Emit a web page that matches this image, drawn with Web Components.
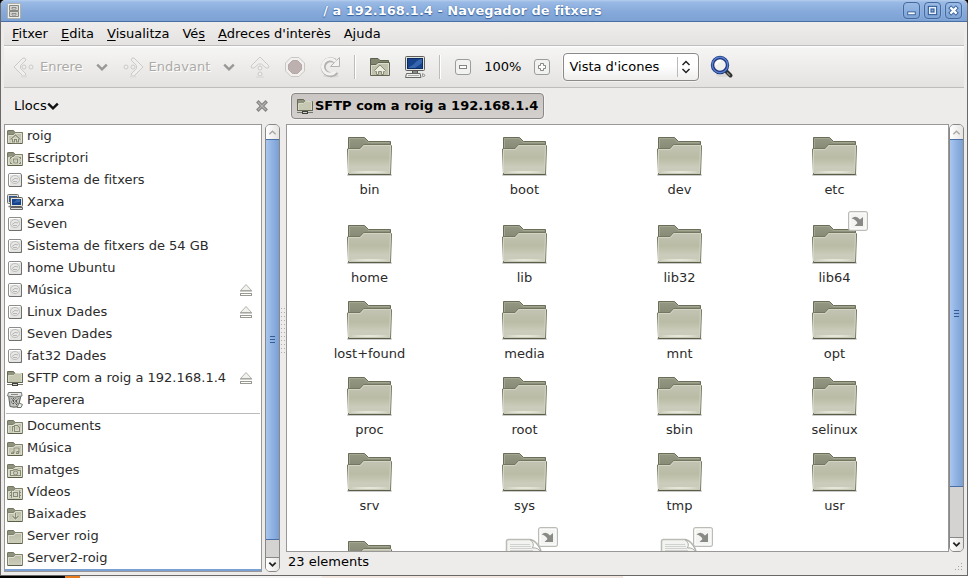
<!DOCTYPE html>
<html lang="ca">
<head>
<meta charset="utf-8">
<title>/ a 192.168.1.4 - Navegador de fitxers</title>
<style>
html, body { margin: 0; height: 100%; }
body { font: 13px/16px "DejaVu Sans", sans-serif; color: #000; background: #000; overflow: hidden; }
</style>
</head>
<body>
<file-browser></file-browser>
<script>
const define = (name, html, setup) => {
  const template = document.createElement('template');
  template.innerHTML = html;
  customElements.define(name, class extends HTMLElement {
    constructor() {
      super();
      this.attachShadow({ mode: 'open' }).append(template.content.cloneNode(true));
    }
    connectedCallback() { if (setup) setup(this, this.shadowRoot); }
  });
};

const RESET = `button, a { all: unset; box-sizing: border-box; cursor: default; }`;

/* ---------- icons ---------- */
const smallFolder = extra => `<svg viewBox="0 0 16 16">
  <path d="M.5 14V3Q.5 2.500 1 2.500H6.500L8 4.500H14.500Q15.500 4.500 15.500 5.500V14Z" fill="#8f927d" stroke="#74775f"/>
  <path d="M.5 7L2 6.500H6.500L8 4.500H15.500V15.500H.5Z" fill="url(#sf)" stroke="#7f826b"/>
  <path d="M1.500 14.500V7.500H7L8.500 5.500H14.500V14.500" fill="none" stroke="#dedfd0"/>
  <path d="M1 15.500H15" stroke="#5c5f47"/>
  <defs><linearGradient id="sf" x2="0" y2="1"><stop stop-color="#b8baa5"/><stop offset="1" stop-color="#cdcfbc"/></linearGradient></defs>${extra || ''}</svg>`;
const glyph = d => `<path d="${d}" fill="none" stroke="#f1f2e6" stroke-width="2.400" opacity=".6"/><path d="${d}" fill="none" stroke="#888b74" stroke-width="1.100"/>`;
const chevron = (w, c) => `<svg viewBox="0 0 10 10"><path d="M1 3L5 7L9 3" fill="none" stroke="${c}" stroke-width="${w}"/></svg>`;
const SOFT = 'fill="#f0efed" stroke="#cccac7" stroke-width="1"';
const ICONS = {
  folder: smallFolder(),
  home: smallFolder(glyph('M3.500 11.500L8.500 7L13.500 11.500M5.500 11V14H7.500V11.500H9.500V14H11.500V11')),
  desktop: smallFolder(glyph('M3.500 9V7.500H5M12 7.500H13.500V9M3.500 12V13.500H5M12 13.500H13.500V12M6.500 9H10.500V13H7Z')),
  documents: smallFolder(glyph('M5.500 13.500V8.500H7.500M7.500 7.500H10.500L12.500 9.500V13.500H7.500Z')),
  music: smallFolder(glyph('M7 13V8H12V12.500M4.500 13.500H6.500V12H5ZM9.500 13.500H11.500V11.500H10Z')),
  pictures: smallFolder(glyph('M3.500 13.500V8.500H6L7 7.500H10L11 8.500H13.500V13.500ZM8.500 9A2 2 0 1 0 8.600 9Z')),
  videos: smallFolder(glyph('M4.500 6.500V14M12.500 6.500V14M6.500 8.500H10.500V12.500H6.500ZM3 8.500H4M3 11.500H4M13 8.500H14M13 11.500H14')),
  downloads: smallFolder(glyph('M8.500 7V12.500M5.500 10L8.500 13L11.500 10')),
  server: `<svg viewBox="0 0 16 16">
    <path d="M.5 12.500V1.500H6.500L8 3.500H15.500V12.500Z" fill="#8f927d" stroke="#666953"/>
    <path d="M1.500 12.500V5.500H6.500L8.500 3.500H14.500V12.500Z" fill="#c6c8b2" stroke="#d8dac8"/>
    <path d="M.5 5.500V12.500H15.500V4" fill="none" stroke="#666953"/>
    <path d="M0 14.500H16" stroke="#77786d"/><rect x="5.500" y="13.500" width="5" height="2" fill="#cfd0ca" stroke="#3f423c"/></svg>`,
  drive: `<svg viewBox="0 0 16 16"><rect x="1.500" y="1.500" width="13" height="13" rx="1.500" fill="#e4e4e3" stroke="#8d8d8c"/>
    <path d="M2.500 13V2.500H13" fill="none" stroke="#fff"/><path d="M2 14.500H14.500V3" fill="none" stroke="#6f6f6e"/>
    <ellipse cx="8" cy="7.500" rx="4.500" ry="4" fill="#e9e9e8" stroke="#bdbdbc"/><path d="M5 8.500Q8 5 11 7M6 9.500H10" fill="none" stroke="#b5b5b4"/></svg>`,
  network: `<svg viewBox="0 0 16 16"><rect x=".5" y=".5" width="11" height="9" rx="1" fill="#dcdcd7" stroke="#6f706b"/><rect x="2" y="2" width="8" height="6" fill="#2c5695"/>
    <path d="M1.500 12.500H5" stroke="#777" stroke-width="1.500"/>
    <rect x="3.500" y="3.500" width="12" height="9" rx="1" fill="#e5e5e0" stroke="#5f605c"/><rect x="5" y="5" width="9" height="6" fill="#16438b"/><path d="M6 9L10 5.500H13V8Z" fill="#3767ad"/>
    <path d="M3.500 13.500H15.500V15.500H3.500Z" fill="#ddd" stroke="#666"/></svg>`,
  trash: `<svg viewBox="0 0 16 16"><path d="M1.500 3L3 14.500Q7 16 11.500 14.500L14 3Z" fill="#b5b7b3" stroke="#60635d"/>
    <path d="M4 6L6 8L4 10L6 12M6 6L9 9L6 12M9 6L6 9L10 13M12 6L9 9L11 12" fill="none" stroke="#4e514c"/>
    <path d="M5 6V14M8 6V14M11 6V13" stroke="#e2e3e0" stroke-width=".7"/>
    <path d="M.5 4L1.500 .5H14.500L15 4Q8 6 .5 4Z" fill="#e5e6e3" stroke="#777a74"/><path d="M4 2.500H11" stroke="#888b85"/>
    <path d="M10 15.500L12 11L15.500 12.500L14 15.500Z" fill="#eceeea" stroke="#71746e"/></svg>`,
  eject: `<svg viewBox="0 0 14 14"><path d="M1.500 7.500L7 1.500L12.500 7.500Z" fill="#f1f1ee" stroke="#b3b4ad"/><path d="M1 8H13" stroke="#999b92"/><rect x="1.500" y="10.500" width="11" height="2" fill="#fff" stroke="#999b92"/></svg>`,
  bigFolder: `<svg viewBox="1 0 48 44"><defs>
      <linearGradient id="bf" x2="0" y2="1"><stop stop-color="#c3c4b3"/><stop offset=".2" stop-color="#bfc0ad"/><stop offset=".45" stop-color="#babca5"/><stop offset=".75" stop-color="#cbccbb"/><stop offset="1" stop-color="#c9cab8"/></linearGradient>
      <linearGradient id="bb" x2="0" y2="1"><stop stop-color="#959883"/><stop offset="1" stop-color="#7d806c"/></linearGradient>
      <linearGradient id="sh"><stop stop-color="#fff" stop-opacity="0"/><stop offset=".5" stop-color="#e6e7d8"/><stop offset="1" stop-color="#fff" stop-opacity="0"/></linearGradient></defs>
    <rect x="2" y="37" width="45" height="2" rx="1" fill="#000" opacity=".2"/>
    <path d="M3.500 20V.5H19.500L23.500 4.500H45.500V20Z" fill="url(#bb)" stroke="#6a6d57"/>
    <path d="M4.500 11V1.500H19L23 5.500H44.500" fill="none" stroke="#a3a691"/>
    <path d="M2.500 12L3 11.500H15L18.500 7.500H45.500L46.500 9L45.500 37.500H3.500Z" fill="url(#bf)" stroke="#74775f"/>
    <path d="M3.500 36V12.500H15.500L19 8.500H45.500L44.500 36" fill="none" stroke="#d3d4c4"/>
    <rect x="5" y="34" width="39" height="2" fill="url(#sh)"/><path d="M3.500 37.500H45.500" stroke="#5b5e46"/></svg>`,
  document: `<svg viewBox="1 0 48 44"><path d="M6.500 44V.5Q6.500-1.500 8.500-1.500H30C35-1 40 5 41.500 12V44Z" fill="#f3f4f1" stroke="#babdb6" stroke-width="1.500"/>
    <path d="M10 3.500H30M10 5.500H31M10 7.500H32M10 9.500H33" stroke="#d0d2cd"/><path d="M30-1.500Q35 2 32.500 7Q38 6 41.500 12Q38 1 30-1.500Z" fill="#fff" stroke="#a9aca5"/></svg>`,
  emblem: `<svg viewBox="0 0 20 20"><rect x=".7" y=".7" width="18.600" height="18.600" rx="2" fill="#f4f4f3" stroke="#babdb6" stroke-width="1.400"/><rect x="2" y="2" width="16" height="16" fill="none" stroke="#fff"/>
    <path d="M3.500 7.500Q8 3.500 12 8.500L15 6V15H6.500L9.500 12Q7.500 8 3.500 7.500Z" fill="#888a85"/></svg>`,
  back: `<svg viewBox="0 0 24 24"><path d="M2 12L11 3Q13 2 14 5L8.500 10.500V13.500L14 19Q13 22 11 21Z" ${SOFT}/><circle cx="12" cy="12" r="2" ${SOFT}/><circle cx="19" cy="12" r="2" ${SOFT}/><path d="M9 21.500H15" stroke="#dedcda" stroke-width="2"/></svg>`,
  forward: `<svg viewBox="0 0 24 24"><path d="M22 12L13 3Q11 2 10 5L15.500 10.500V13.500L10 19Q11 22 13 21Z" ${SOFT}/><circle cx="12" cy="12" r="2" ${SOFT}/><circle cx="5" cy="12" r="2" ${SOFT}/><path d="M9 21.500H15" stroke="#dedcda" stroke-width="2"/></svg>`,
  up: `<svg viewBox="0 0 24 24"><path d="M12 2L21 11Q21 14 18 13L13.500 9H10.500L6 13Q3 14 3 11Z" ${SOFT}/><circle cx="12" cy="13" r="2" ${SOFT}/><circle cx="12" cy="19" r="2" ${SOFT}/><path d="M8 22H16" stroke="#d8d6d4"/></svg>`,
  stop: `<svg viewBox="0 0 24 24"><path d="M8 2.500H16L21.500 8V16L16 21.500H8L2.500 16V8Z" fill="#f1f0ee" stroke="#c9c7c4"/><path d="M9.500 5.500H14.500L18.500 9.500V14.500L14.500 18.500H9.500L5.500 14.500V9.500Z" fill="#bdb1b0" stroke="#b5a8a7"/></svg>`,
  reload: `<svg viewBox="0 0 24 24"><ellipse cx="13" cy="21" rx="8" ry="1.500" fill="#d9d7d5"/><path d="M18.500 17A7.500 7.500 0 1 1 17 6" fill="none" stroke="#b5b3b0" stroke-width="5"/><path d="M21.500 2.500V11.500H12.500Z" fill="#f3f2f0" stroke="#b5b3b0"/><path d="M17.700 16.300A7.500 7.500 0 1 1 17.500 6.500" fill="none" stroke="#f3f2f0" stroke-width="3"/></svg>`,
  homeFolder: `<svg viewBox="0 0 24 24"><path d="M2.500 18V3.500H10L12 5.500H20.500V18Z" fill="#82856f" stroke="#5e614c"/>
    <path d="M2.500 9.500H8L10 7.500H21.500V20.500H2.500Z" fill="#c0c2ad" stroke="#63664f"/><path d="M3.500 20V10.500H8.500L10.500 8.500H20.500V20" fill="none" stroke="#dcddce"/>
    <path d="M6.500 15.500L12 10L17.500 15.500L16.500 16.500H15.500V19.500H13.500V16.500H10.500V19.500H8.500V16.500H7.500Z" fill="#eceddf" stroke="#888b74"/></svg>`,
  computer: `<svg viewBox="0 0 24 24"><rect x="2.500" y="1.500" width="19" height="14" rx="1" fill="#e4e4df" stroke="#5e5f5b"/><rect x="4.500" y="3.500" width="15" height="10" fill="#16438b" stroke="#0c2c61"/><path d="M5 13L11 9Q15 4 19 4V8L12 13Z" fill="#3666ad"/>
    <path d="M9.500 15.500H14.500V18.500H9.500Z" fill="#888a85" stroke="#555"/><path d="M5 18.500H18" stroke="#ccc"/><path d="M3.500 18.500H17L18 22.500H2.500Z" fill="#f0f0ee" stroke="#696a66"/><path d="M5 20.500H16" stroke="#aaa"/><path d="M19.500 18.500L22 20Q22 22 19.500 21.500Z" fill="#eee" stroke="#999"/></svg>`,
  zoomOut: `<svg viewBox="0 0 16 16"><rect x=".5" y=".5" width="15" height="15" rx="2.500" fill="#f2f2f0" stroke="#9b9d98"/><rect x="4.500" y="6.500" width="7" height="3" fill="#fff" stroke="#858782"/></svg>`,
  zoomIn: `<svg viewBox="0 0 16 16"><rect x=".5" y=".5" width="15" height="15" rx="2.500" fill="#f2f2f0" stroke="#9b9d98"/><path d="M6.500 4.500H9.500V6.500H11.500V9.500H9.500V11.500H6.500V9.500H4.500V6.500H6.500Z" fill="#fff" stroke="#858782"/></svg>`,
  search: `<svg viewBox="0 0 24 24"><ellipse cx="13" cy="20" rx="7" ry="2" fill="#dad9d7"/><path d="M16 16L20.500 20.500" stroke="#2e3030" stroke-width="4" stroke-linecap="round"/><path d="M17 17.500L20 20.500" stroke="#8f8b80" stroke-width="1.200"/>
    <circle cx="10" cy="10" r="7.500" fill="#f0f0ef" stroke="#20347c" stroke-width="3.400"/><circle cx="10" cy="10" r="7.700" fill="none" stroke="#5580cf" stroke-width="1.400"/><path d="M6 10Q7 6 11 6" fill="none" stroke="#fff" stroke-width="2"/></svg>`,
  down: chevron(2, '#9a9895'),
  downDark: chevron(2, '#111'),
  arrowUp: `<svg viewBox="0 0 10 10"><path d="M1.500 7L5 3.500L8.500 7" fill="none" stroke="#aaa8a6" stroke-width="1.500"/></svg>`,
  arrowDown: `<svg viewBox="0 0 10 10"><path d="M1.500 3L5 6.500L8.500 3" fill="none" stroke="#222" stroke-width="2"/></svg>`,
  updown: `<svg viewBox="0 0 10 14"><path d="M1.500 5L5 1.500L8.500 5M1.500 9L5 12.500L8.500 9" fill="none" stroke="#222" stroke-width="1.500"/></svg>`,
  close: `<svg viewBox="0 0 12 12"><path d="M2.500 2.500L9.500 9.500M9.500 2.500L2.500 9.500" stroke="#858481" stroke-width="3.400" stroke-linecap="square"/><path d="M2.500 2.500L9.500 9.500M9.500 2.500L2.500 9.500" stroke="#b5b3b1" stroke-width="1.200" stroke-linecap="square"/></svg>`,
  cabinet: `<svg viewBox="0 0 16 16"><rect x="1.500" y=".5" width="13" height="15" rx="1" fill="#efefec" stroke="#b0b0a8"/><path d="M3.500 2.500H12.500V7.500H3.500ZM3.500 8.500H12.500V13.500H3.500Z" fill="#d5d5d1" stroke="#888983"/><path d="M6 4.500H10V6H6ZM6 10.500H10V12H6Z" fill="#fff" stroke="#777" stroke-width=".8"/></svg>`,
  minimize: `<svg viewBox="0 0 16 16"><path d="M3.500 11H12.500" stroke="#35609c" stroke-width="4"/><path d="M4.500 11H11.500" stroke="#fff" stroke-width="2"/></svg>`,
  maximize: `<svg viewBox="0 0 16 16"><rect x="5" y="5" width="6" height="6" fill="none" stroke="#35609c" stroke-width="4"/><rect x="5" y="5" width="6" height="6" fill="none" stroke="#e6effb" stroke-width="1.600"/></svg>`,
  shut: `<svg viewBox="0 0 16 16"><path d="M5.500 5.500L10.500 10.500M10.500 5.500L5.500 10.500" stroke="#35609c" stroke-width="4.400" stroke-linecap="square"/><path d="M5.500 5.500L10.500 10.500M10.500 5.500L5.500 10.500" stroke="#fff" stroke-width="2.400" stroke-linecap="square"/></svg>`
};
define('ui-icon', `<style>:host{display:block;flex:none;width:var(--w,16px);height:var(--h,var(--w,16px))} span{display:contents} svg{display:block;width:100%;height:100%;overflow:visible}</style><span></span>`,
  (el, root) => { root.querySelector('span').innerHTML = ICONS[el.getAttribute('name')] || ''; });

/* ---------- title bar ---------- */
define('title-bar', `<style>${RESET}
:host{display:flex;align-items:center;gap:5px;height:21px;padding:0 5px 0 5px;border-bottom:1px solid #4a6ea6;border-top-left-radius:5px;border-top-right-radius:5px;background:linear-gradient(#b5cdee,#9abae5 2px,#86aadb 55%,#7ca1d3)}
h1{flex:1;margin:0;text-align:center;font:bold 13px/16px "DejaVu Sans",sans-serif;color:#fff;text-shadow:0 1px 1px #35609c,0 0 1px #35609c}
button{width:17px;height:17px;border:1px solid #45699d;border-radius:4px;background:linear-gradient(#9bbbe6,#7ea3d5);box-shadow:0 0 0 1px #a5c2ea55;display:grid;place-items:center;--w:15px}
nav{display:flex;gap:4px}
</style><ui-icon name="cabinet"></ui-icon><h1><slot></slot></h1>
<nav><button aria-label="Minimitza"><ui-icon name="minimize"></ui-icon></button><button aria-label="Maximitza"><ui-icon name="maximize"></ui-icon></button><button aria-label="Tanca"><ui-icon name="shut"></ui-icon></button></nav>`);

/* ---------- menu bar ---------- */
define('menu-bar', `<style>${RESET}
:host{display:flex;gap:13px;height:23px;align-items:center;padding:0 8px;border-bottom:1px solid #c0bebc;background:linear-gradient(#eeedec,#e4e3e1)}
u{text-underline-offset:2px;text-decoration-thickness:1px}
</style><button><u>F</u>itxer</button><button><u>E</u>dita</button><button><u>V</u>isualitza</button><button>Vé<u>s</u></button><button><u>A</u>dreces d'interès</button><button>A<u>j</u>uda</button>`);

/* ---------- toolbar ---------- */
define('tool-bar', `<style>${RESET}
:host{display:flex;align-items:center;gap:11px;height:41px;padding:0 8px;border-bottom:1px solid #bfbdbb;background:linear-gradient(#fff,#f5f5f4 2px,#e4e2e0)}
button{display:flex;align-items:center;gap:4px}
button:disabled{color:#acaaa7;text-shadow:1px 1px 0 #fff}
.big{--w:24px}
.more{width:16px;justify-content:center;--w:12px}
hr{border:0;border-left:1px solid #bebcba;border-right:1px solid #fff;height:24px;margin:0 1px}
.zoom{display:flex;gap:13px;align-items:center;padding:0 2px}
.pick{display:grid;align-items:center;width:136px;height:28px}
select{grid-area:1/1;appearance:none;font:inherit;color:#000;width:100%;height:100%;padding:0 36px 0 5px;margin:0;border:1px solid #8c8a88;border-radius:4px;background:linear-gradient(#fff 45%,#efeeed);box-shadow:0 0 0 1px #fff8}
.pick ui-icon{grid-area:1/1;justify-self:end;margin-right:8px;--w:10px;--h:14px;pointer-events:none}
.pick i{grid-area:1/1;justify-self:end;margin-right:21px;width:1px;height:20px;background:#bdbbb9;pointer-events:none}
</style>
<button disabled class="big"><ui-icon name="back"></ui-icon>Enrere</button><button disabled class="more" aria-label="Historial enrere"><ui-icon name="down"></ui-icon></button>
<button disabled class="big"><ui-icon name="forward"></ui-icon>Endavant</button><button disabled class="more" aria-label="Historial endavant"><ui-icon name="down"></ui-icon></button>
<button disabled class="big" aria-label="Amunt"><ui-icon name="up"></ui-icon></button>
<button disabled class="big" aria-label="Atura"><ui-icon name="stop"></ui-icon></button>
<button class="big" aria-label="Recarrega"><ui-icon name="reload"></ui-icon></button><hr>
<button class="big" aria-label="Inici"><ui-icon name="homeFolder"></ui-icon></button>
<button class="big" aria-label="Ordinador"><ui-icon name="computer"></ui-icon></button><hr>
<div class="zoom"><button aria-label="Redueix"><ui-icon name="zoomOut"></ui-icon></button><button>100%</button><button aria-label="Amplia"><ui-icon name="zoomIn"></ui-icon></button></div>
<div class="pick"><select aria-label="Vista"><option>Vista d'icones</option></select><i></i><ui-icon name="updown"></ui-icon></div>
<button class="big" aria-label="Cerca"><ui-icon name="search"></ui-icon></button>`);

/* ---------- scroll bar ---------- */
define('scroll-bar', `<style>${RESET}
:host{display:flex;flex-direction:column;flex:none;box-sizing:border-box;width:15px;border:1px solid #8a8886;border-radius:5px;background:#d5d3d1;overflow:hidden}
button{height:14px;flex:none;display:grid;place-items:center;background:linear-gradient(90deg,#fff,#e6e4e2);--w:9px}
.track{flex:1;display:flex;flex-direction:column}
.thumb{box-sizing:border-box;height:var(--thumb);border:solid #4a6ea6;border-width:1px 0;background:linear-gradient(90deg,#a9c6ee,#8fb2e2 50%,#7a9fd2);display:grid;place-items:center}
.grip{width:5px;height:7px;background:repeating-linear-gradient(#345c94 0 1px,transparent 1px 3px)}
button:last-child{border-top:1px solid #8a8886}
</style><button aria-label="Amunt"><ui-icon name="arrowUp"></ui-icon></button><div class="track"><div class="thumb"><div class="grip"></div></div></div><button aria-label="Avall"><ui-icon name="arrowDown"></ui-icon></button>`);

/* ---------- places side pane ---------- */
define('place-item', `<style>${RESET}
:host{display:block;color:#2b2b2b}
a{display:flex;align-items:center;width:100%;height:22px;gap:4px;padding:0 8px 0 2px}
span{flex:1;white-space:nowrap}
:host([selected]) a{background:#7ba0d4}
:host([selected]) .kind{visibility:hidden}
ui-icon[name=eject]{--w:14px}
</style><a href="#"><span><slot></slot></span></a>`, (el, root) => {
  const link = root.querySelector('a');
  link.insertAdjacentHTML('afterbegin', `<ui-icon class="kind" name="${el.getAttribute('icon')}"></ui-icon>`);
  if (el.hasAttribute('eject')) link.insertAdjacentHTML('beforeend', '<ui-icon name="eject"></ui-icon>');
});
const place = ([icon, text, eject]) => `<place-item icon="${icon}" ${eject ? 'eject' : ''}>${text}</place-item>`;
const PLACES = [['home','roig'],['desktop','Escriptori'],['drive','Sistema de fitxers'],['network','Xarxa'],['drive','Seven'],['drive','Sistema de fitxers de 54 GB'],['drive','home Ubuntu'],['drive','Música',1],['drive','Linux Dades',1],['drive','Seven Dades'],['drive','fat32 Dades'],['server','SFTP com a roig a 192.168.1.4',1],['trash','Paperera']];
const BOOKMARKS = [['documents','Documents'],['music','Música'],['pictures','Imatges'],['videos','Vídeos'],['downloads','Baixades'],['folder','Server roig'],['folder','Server2-roig']];
define('side-pane', `<style>${RESET}
:host{display:flex;flex-direction:column;flex:none;width:276px;min-height:0;padding-bottom:3px;box-sizing:border-box}
header{display:flex;justify-content:space-between;align-items:center;height:36px;padding:0 12px 0 10px}
button{display:flex;align-items:center;--w:12px}
.body{flex:1;min-height:0;display:flex;gap:3px}
.list{flex:1;min-height:0;overflow:hidden;border:1px solid #9a9896;background:#fff}
hr{margin:2px 1px 1px;border:0;border-top:1px solid #bdbbb9}
scroll-bar{--thumb:96%}
</style><header><button>Llocs<ui-icon name="downDark"></ui-icon></button><button aria-label="Tanca la barra"><ui-icon name="close"></ui-icon></button></header>
<div class="body"><div class="list">${PLACES.map(place).join('')}<hr>${BOOKMARKS.map(place).join('')}<place-item icon="folder" selected></place-item></div><scroll-bar></scroll-bar></div>`);

/* ---------- icon view ---------- */
define('file-icon', `<style>${RESET}
:host{display:block;color:#2b2b2b}
button{display:flex;flex-direction:column;align-items:center;width:100%}
.pic{position:relative;--w:48px;--h:44px}
:host([linked]) .pic{margin-top:12px}
.emblem{position:absolute;right:-9px;top:-14px;--w:20px;--h:20px}
.name{height:18px;line-height:18px}
</style><button><div class="pic"></div><div class="name"><slot></slot></div></button>`, (el, root) => {
  root.querySelector('.pic').innerHTML = `<ui-icon name="${el.getAttribute('kind') || 'bigFolder'}"></ui-icon>` + (el.hasAttribute('linked') ? '<ui-icon class="emblem" name="emblem"></ui-icon>' : '');
});
const FILES = 'bin boot dev etc home lib lib32 lib64 lost+found media mnt opt proc root sbin selinux srv sys tmp usr'.split(' ');
define('icon-view', `<style>
:host{flex:1;min-width:0;min-height:0;overflow:hidden;box-sizing:border-box;border:1px solid #9a9896;background:#fff;display:grid;grid-template-columns:repeat(auto-fill,155px);grid-auto-rows:max-content;align-items:end;gap:14px 0;padding:12px 5px 0}
</style>${FILES.map(f => `<file-icon ${f === 'lib64' ? 'linked' : ''}>${f}</file-icon>`).join('')}<file-icon></file-icon><file-icon kind="document" linked></file-icon><file-icon kind="document" linked></file-icon>`);

define('path-bar', `<style>${RESET}
:host{display:flex;align-items:center;height:36px;padding-left:5px}
button{display:flex;align-items:center;gap:2px;height:26px;padding:0 5px;font-weight:bold;border:1px solid #8a8886;border-radius:4px;background:linear-gradient(#c9c6c3,#d3d0ce);box-shadow:0 0 0 1px #f6f5f4}
</style><button><ui-icon name="server"></ui-icon><slot></slot></button>`);

define('status-bar', `<style>
:host{display:flex;align-items:center;justify-content:space-between;height:23px;padding-left:2px}
i{align-self:end;width:12px;height:12px;margin-bottom:3px;background:conic-gradient(from 270deg at 1px 1px,#a5a3a0 90deg,transparent 0) 0 0/3px 3px;clip-path:polygon(100% 0,100% 100%,0 100%)}
span{padding-bottom:3px}
</style><span><slot></slot></span><i></i>`);

/* ---------- window ---------- */
define('file-browser', `<style>
:host{display:grid;grid-template-rows:minmax(0,1fr) 2px;height:100vh}
.window{display:flex;flex-direction:column;min-height:0;border:solid #6b6967;border-width:0 1px 1px;background:#edeceb;border-radius:5px 5px 0 0}
.window > :not(title-bar){margin:0 3px}
.body{flex:1;display:flex;min-height:0}
.split{flex:none;width:6px;display:grid;place-items:center}
.split i{width:6px;height:48px;background:conic-gradient(from 270deg at 1px 1px,#b0aeab 90deg,transparent 0) 1px 0/3px 4px}
.main{flex:1;min-width:0;display:flex;flex-direction:column}
.view{flex:1;min-height:0;display:flex;--thumb:87.500%}
.desk{background:linear-gradient(90deg,#000 0 6.700%,#e87a1c 6.700% 8.300%,#f4f4f4 8.300% 33.300%,#f2e8e1 33.300% 64.400%,#fff 64.400%)}
</style>
<div class="window"><title-bar>/ a 192.168.1.4 - Navegador de fitxers</title-bar><menu-bar></menu-bar><tool-bar></tool-bar>
<div class="body"><side-pane></side-pane><div class="split"><i></i></div>
<div class="main"><path-bar>SFTP com a roig a 192.168.1.4</path-bar><div class="view"><icon-view></icon-view><scroll-bar></scroll-bar></div><status-bar>23 elements</status-bar></div></div></div>
<div class="desk"></div>`);
</script>
</body>
</html>
